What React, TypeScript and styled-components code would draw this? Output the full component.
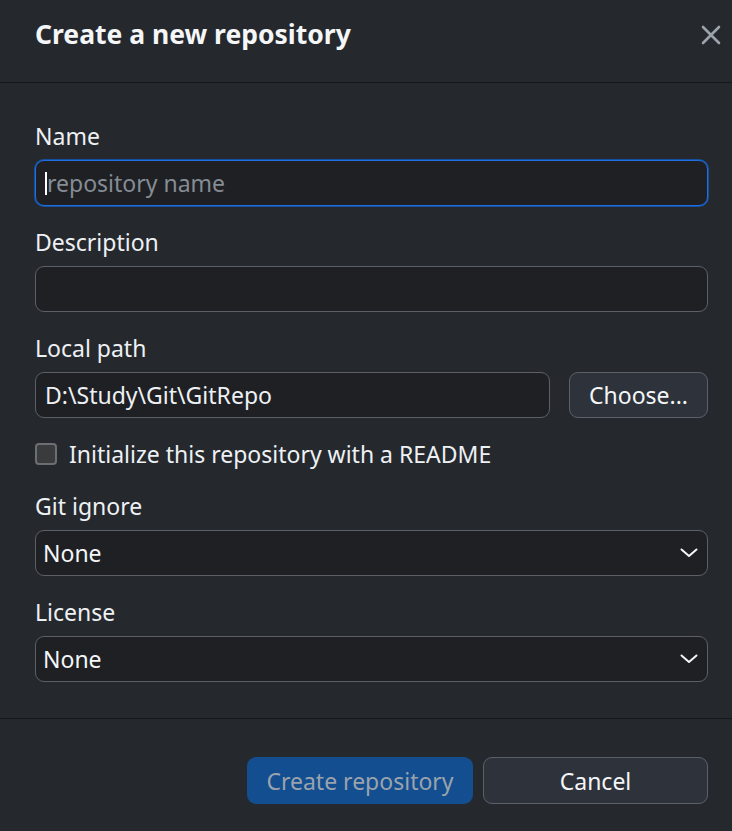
import React from "react";
import styled, { createGlobalStyle } from "styled-components";

const Global = createGlobalStyle`
  html, body { margin: 0; padding: 0; background: #25292e; }
  body { font-family: "Noto Sans", "Open Sans", sans-serif; color: #eef1f4; }
  * { box-sizing: border-box; }
`;

const Dialog = styled.div`
  width: 732px;
  height: 831px;
  background: #25292e;
  display: flex;
  flex-direction: column;
`;

const Header = styled.header`
  height: 83px;
  flex: none;
  display: flex;
  align-items: flex-start;
  justify-content: space-between;
  padding: 14px 11px 0 35px;
  border-bottom: 1px solid #151719;
`;

const Title = styled.h1`
  margin: 0;
  font-size: 26.5px;
  font-weight: 700;
  line-height: 40px;
  color: #f4f6f8;
`;

const CloseButton = styled.button`
  width: 20px;
  height: 20px;
  margin-top: 11px;
  padding: 0;
  border: 0;
  background: transparent;
  display: flex;
  align-items: center;
  justify-content: center;
`;

const Body = styled.div`
  flex: 1;
  display: flex;
  flex-direction: column;
  padding: 37px 24px 0 35px;
  border-bottom: 1px solid #151719;
`;

const Field = styled.div`
  display: flex;
  flex-direction: column;
  margin-bottom: 20px;
`;

const Label = styled.label`
  font-size: 23px;
  line-height: 32px;
  margin-bottom: 8px;
  color: #eef1f4;
`;

const Row = styled.div`
  display: flex;
  gap: 19px;
`;

const InputWrap = styled.div`
  position: relative;
  flex: 1 1 auto;
  min-width: 0;
  display: flex;
`;

const Caret = styled.span`
  position: absolute;
  left: 10px;
  top: 12px;
  width: 2px;
  height: 23px;
  background: #ffffff;
`;

const TextInput = styled.input<{ $focused?: boolean }>`
  flex: 1 1 auto;
  min-width: 0;
  width: 100%;
  height: 46px;
  border-radius: 9px;
  background: #1e2024;
  border: 1px solid ${(p) => (p.$focused ? "#1f6fe0" : "#5b6068")};
  box-shadow: ${(p) => (p.$focused ? "0 0 0 1px #15509f" : "none")};
  color: #eef1f4;
  font-family: inherit;
  font-size: 23px;
  padding: 0 9px 0 ${(p) => (p.$focused ? 11 : 9)}px;
  outline: none;
  caret-color: transparent;
  &::placeholder { color: #858c94; }
`;

const SecondaryButton = styled.button<{ $width: number; $height: number }>`
  flex: none;
  width: ${(p) => p.$width}px;
  height: ${(p) => p.$height}px;
  border-radius: 9px;
  background: #2e333b;
  border: 1px solid #5b6068;
  color: #f4f6f8;
  font-family: inherit;
  font-size: 23px;
  padding: 0;
`;

const CheckRow = styled.label`
  display: flex;
  align-items: center;
  gap: 12px;
  height: 32px;
  margin-bottom: 20px;
  font-size: 23px;
  color: #eef1f4;
`;

const Box = styled.span`
  width: 22px;
  height: 22px;
  border-radius: 4px;
  background: #3a3b3c;
  border: 2px solid #6b6e72;
`;

const SelectBox = styled.div`
  height: 46px;
  border-radius: 9px;
  background: #1e2024;
  border: 1px solid #5b6068;
  display: flex;
  align-items: center;
  justify-content: space-between;
  padding: 0 9px 0 7px;
  font-size: 23px;
  color: #f4f6f8;
`;

const Footer = styled.footer`
  height: 112px;
  flex: none;
  display: flex;
  justify-content: flex-end;
  align-items: flex-start;
  gap: 10px;
  padding: 38px 24px 0 0;
`;

const PrimaryButton = styled.button`
  width: 226px;
  height: 47px;
  border-radius: 9px;
  background: #124e90;
  border: 0;
  color: #9aa3ad;
  font-family: inherit;
  font-size: 23px;
  padding: 0;
`;

const Chevron = () => (
  <svg width="18" height="10" viewBox="0 0 18 10" fill="none">
    <path d="M1.5 1.5 L9 8 L16.5 1.5" stroke="#f4f6f8" strokeWidth="2" strokeLinecap="round" strokeLinejoin="round" />
  </svg>
);

const CloseIcon = () => (
  <svg width="20" height="20" viewBox="0 0 20 20" fill="none">
    <path d="M2 2 L18 18 M18 2 L2 18" stroke="#9ca3ab" strokeWidth="2.6" strokeLinecap="round" />
  </svg>
);

export default function App() {
  return (
    <>
      <Global />
      <Dialog>
        <Header>
          <Title>Create a new repository</Title>
          <CloseButton aria-label="Close">
            <CloseIcon />
          </CloseButton>
        </Header>
        <Body>
          <Field>
            <Label>Name</Label>
            <InputWrap>
              <TextInput $focused placeholder="repository name" />
              <Caret />
            </InputWrap>
          </Field>
          <Field>
            <Label>Description</Label>
            <TextInput />
          </Field>
          <Field>
            <Label>Local path</Label>
            <Row>
              <TextInput defaultValue="D:\Study\Git\GitRepo" />
              <SecondaryButton $width={139} $height={46}>Choose...</SecondaryButton>
            </Row>
          </Field>
          <CheckRow>
            <Box />
            Initialize this repository with a README
          </CheckRow>
          <Field>
            <Label>Git ignore</Label>
            <SelectBox>
              None
              <Chevron />
            </SelectBox>
          </Field>
          <Field>
            <Label>License</Label>
            <SelectBox>
              None
              <Chevron />
            </SelectBox>
          </Field>
        </Body>
        <Footer>
          <PrimaryButton disabled>Create repository</PrimaryButton>
          <SecondaryButton $width={225} $height={47}>Cancel</SecondaryButton>
        </Footer>
      </Dialog>
    </>
  );
}
